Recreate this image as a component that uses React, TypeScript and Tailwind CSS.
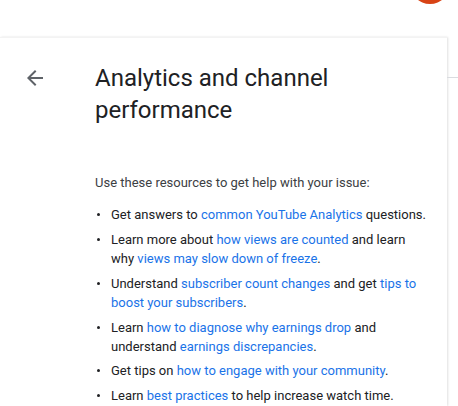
import React from "react";

const Link: React.FC<{ children: React.ReactNode }> = ({ children }) => (
  <a href="#" className="text-[#1a73e8] no-underline">
    {children}
  </a>
);

const items: React.ReactNode[] = [
  <>
    Get answers to <Link>common YouTube Analytics</Link> questions.
  </>,
  <>
    Learn more about <Link>how views are counted</Link> and learn why{" "}
    <Link>views may slow down of freeze</Link>.
  </>,
  <>
    Understand <Link>subscriber count changes</Link> and get{" "}
    <Link>tips to boost your subscribers</Link>.
  </>,
  <>
    Learn <Link>how to diagnose why earnings drop</Link> and understand{" "}
    <Link>earnings discrepancies</Link>.
  </>,
  <>
    Get tips on <Link>how to engage with your community</Link>.
  </>,
  <>
    Learn <Link>best practices</Link> to help increase watch time.
  </>,
];

export default function App() {
  return (
    <div
      className="relative w-[458px] h-[406px] overflow-hidden bg-white"
      style={{ fontFamily: "Roboto, 'Liberation Sans', sans-serif" }}
    >
      {/* avatar peeking from the top bar */}
      <div className="absolute left-[410px] top-[-36px] w-10 h-10 rounded-full bg-[#d84315]" />

      <div className="flex pt-[37px] h-full">
        <div className="w-[447px] shrink-0 h-full border-t border-[#f3f3f3] shadow-[1px_0_2px_rgba(0,0,0,0.12)] flex">
          <div className="w-[95px] shrink-0 pl-[23px] pt-[28px]">
            <svg width="24" height="24" viewBox="0 0 24 24" fill="#5f6368">
              <path d="M20 11H7.83l5.59-5.59L12 4l-8 8 8 8 1.41-1.41L7.83 13H20v-2z" />
            </svg>
          </div>
          <div className="pt-[24px] text-[#202124]">
            <h1 className="text-[24px] leading-[32px] font-normal w-[300px]">
              Analytics and channel performance
            </h1>
            <p className="mt-[47px] text-[13px] leading-[20px] text-[#3c4043]">
              Use these resources to get help with your issue:
            </p>
            <ul className="mt-[12px] text-[13px] leading-[19.2px] text-[#202124]">
              {items.map((item, i) => (
                <li key={i} className="flex mb-[5.5px]">
                  <span className="w-[16px] shrink-0 pt-[8px] pl-[2px]">
                    <span className="block w-[3px] h-[3px] rounded-full bg-[#202124]" />
                  </span>
                  <span className="w-[318px]">{item}</span>
                </li>
              ))}
            </ul>
          </div>
        </div>
        <div className="flex-1 mt-[40px] h-0 border-t border-[#dadce0]" />
      </div>
    </div>
  );
}
